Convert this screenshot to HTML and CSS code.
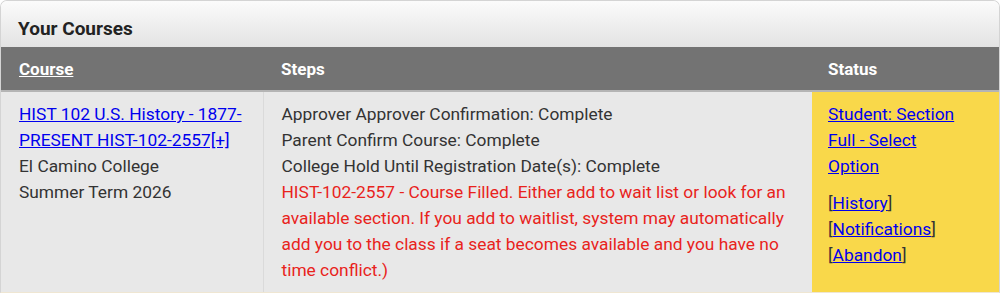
FILE: index.html
```html
<!DOCTYPE html>
<html lang="en">
<head>
  <meta charset="UTF-8">
  <title>Your Courses</title>
  <link rel="stylesheet" href="styles.css">
</head>
<body>
  <div class="panel">
    <div class="panel-title">Your Courses</div>

    <table class="courses">
      <thead>
        <tr>
          <th class="col-course"><a href="#">Course</a></th>
          <th class="col-steps">Steps</th>
          <th class="col-status">Status</th>
        </tr>
      </thead>
      <tbody>
        <tr>
          <td class="col-course">
            <a href="#">HIST 102 U.S. History - 1877-PRESENT HIST-102-2557[+]</a><br>
            El Camino College<br>
            Summer Term 2026
          </td>
          <td class="col-steps">
            Approver Approver Confirmation: Complete<br>
            Parent Confirm Course: Complete<br>
            College Hold Until Registration Date(s): Complete<br>
            <span class="error">HIST-102-2557 - Course Filled. Either add to wait list or look for an available section. If you add to waitlist, system may automatically add you to the class if a seat becomes available and you have no time conflict.)</span>
          </td>
          <td class="col-status warn">
            <div class="status-main"><a href="#">Student: Section Full - Select Option</a></div>
            <div class="actions">
              [<a href="#">History</a>]<br>
              [<a href="#">Notifications</a>]<br>
              [<a href="#">Abandon</a>]
            </div>
          </td>
        </tr>
      </tbody>
    </table>
  </div>
</body>
</html>
```

FILE: styles.css
```css
* {
  margin: 0;
  padding: 0;
  box-sizing: border-box;
}

body {
  font-family: Roboto, "Liberation Sans", Arial, sans-serif;
  font-size: 17.35px;
  color: #333;
  background: #fff;
}

a {
  color: #0000ee;
  text-decoration: underline;
}

.panel {
  width: 1000px;
  border: 1px solid #d4d4d4;
  border-bottom-color: #efe6d2;
  border-radius: 7px 7px 0 0;
  overflow: hidden;
}

.panel-title {
  height: 46px;
  padding: 8px 17px 0;
  display: flex;
  align-items: center;
  font-size: 19px;
  font-weight: bold;
  color: #222;
  background: linear-gradient(to bottom, #fbfbfb, #e3e3e3);
}

.courses {
  width: 100%;
  border-collapse: collapse;
  table-layout: fixed;
}

.courses th {
  height: 44px;
  padding: 0 18px;
  text-align: left;
  font-size: 17px;
  font-weight: bold;
  color: #fff;
  background: #737373;
  border-bottom: 2px solid #b4b4b4;
}

.courses th a {
  color: #fff;
}

.courses td {
  padding: 9px 18px;
  line-height: 26px;
  vertical-align: top;
  background: #e8e8e8;
}

.col-course {
  width: 262px;
}

.courses td.col-course {
  border-right: 1px solid #dadada;
}

.col-steps {
  width: 549px;
}

.courses .col-status {
  padding-left: 16px;
  padding-right: 30px;
}

.courses td.warn {
  background: #f9d84a;
}

.error {
  color: #e8231c;
}

.status-main {
  margin-bottom: 11px;
}
```
